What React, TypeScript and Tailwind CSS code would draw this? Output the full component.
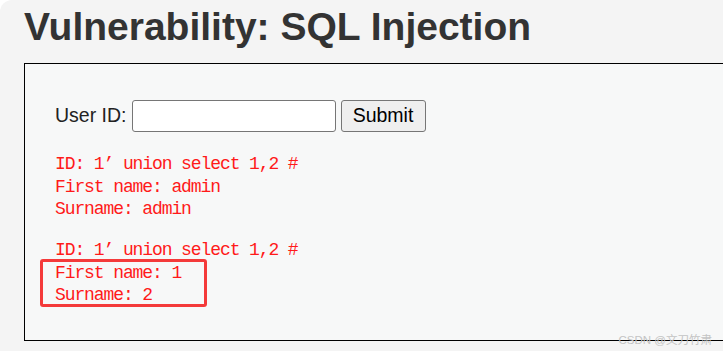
import React from 'react';

interface ResultBlock {
  id: string;
  first: string;
  surname: string;
}

const results: ResultBlock[] = [
  { id: "1’ union select 1,2 #", first: 'admin', surname: 'admin' },
  { id: "1’ union select 1,2 #", first: '1', surname: '2' },
];

export default function App() {
  return (
    <div className="w-[723px] h-[351px] bg-white overflow-hidden font-['Liberation_Sans',Arial,sans-serif]">
      <div className="relative h-full bg-[#f4f4f4] rounded-tl-[12px] pl-[24px]">
        <h1 className="pt-[7px] text-[39px] font-bold leading-none text-[#333] whitespace-nowrap">
          Vulnerability: SQL Injection
        </h1>

        <div className="relative mt-[17px] h-[278px] border-l border-t border-b border-black bg-[#f7f8f8] pl-[30px] pt-[36px]">
          <form className="flex items-center text-[19.5px] text-[#222]" onSubmit={(e) => e.preventDefault()}>
            <span className="leading-none">User ID:</span>
            <input
              type="text"
              className="ml-[5px] w-[204px] h-[32px] rounded-[3px] border border-[#767676] bg-white"
            />
            <button
              type="submit"
              className="ml-[5px] w-[85px] h-[32px] rounded-[3px] border border-[#767676] bg-[#efefef] text-[19.5px] text-black leading-none"
            >
              Submit
            </button>
          </form>

          <div className="mt-[21px] flex flex-col gap-[18.5px] font-['Liberation_Mono',monospace] text-[18px] tracking-[-1.1px] leading-[22.5px] text-[#ff1a1a]">
            {results.map((r, i) => (
              <pre key={i} className="font-['Liberation_Mono',monospace]">
                {`ID: ${r.id}\nFirst name: ${r.first}\nSurname: ${r.surname}`}
              </pre>
            ))}
          </div>

          {/* highlight drawn over the second result */}
          <div className="absolute left-[15px] top-[195px] w-[167px] h-[48px] rounded-[3px] border-[3px] border-[#f43a3a]" />
        </div>

        <div className="absolute right-[11px] bottom-[5px] text-[11.5px] leading-none text-[#c4c4c4] font-['Liberation_Sans','Noto_Sans_CJK_SC',sans-serif]">
          CSDN @文刀竹肃
        </div>
      </div>
    </div>
  );
}
